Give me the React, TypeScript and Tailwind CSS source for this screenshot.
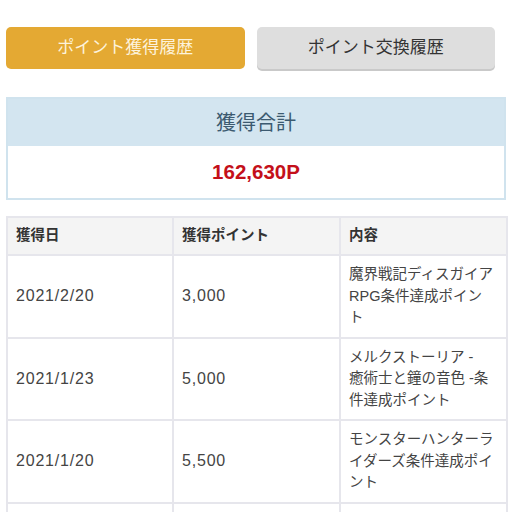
import React from 'react';

interface HistoryRow {
  date: string;
  points: string;
  detail: string[];
}

// lines are kept as the reference wraps them
const rows: HistoryRow[] = [
  { date: '2021/2/20', points: '3,000', detail: ['魔界戦記ディスガイア', 'RPG条件達成ポイン', 'ト'] },
  { date: '2021/1/23', points: '5,000', detail: ['メルクストーリア -', '癒術士と鐘の音色 -条', '件達成ポイント'] },
  { date: '2021/1/20', points: '5,500', detail: ['モンスターハンターラ', 'イダーズ条件達成ポイ', 'ント'] },
  { date: '2021/1/18', points: '2,000', detail: ['ロマンシング サガ リ・', 'ユニバース条件達成ポ', 'イント'] },
];

const font = { fontFamily: '"Liberation Sans", "Noto Sans CJK JP", sans-serif' };

export default function App() {
  return (
    <div className="min-h-[512px] bg-white" style={font}>
      {/* Tabs */}
      <div className="flex gap-3 px-[6px] pt-[27px] pr-[17px]">
        <button className="h-[42px] flex-1 rounded-[5px] bg-[#e4a933] text-[17px] text-[#fdf3dc]">
          ポイント獲得履歴
        </button>
        <button className="h-[42px] flex-1 rounded-[5px] bg-[#dedede] text-[17px] text-[#333] shadow-[0_2px_0_#c9c9c9]">
          ポイント交換履歴
        </button>
      </div>

      {/* Total */}
      <div className="mx-[6px] mt-[28px] border-2 border-[#d0e3ee]">
        <div className="flex h-[47px] items-center justify-center bg-[#d3e5f0] text-[20px] text-[#3c5a70]">
          獲得合計
        </div>
        <div className="flex h-[52px] items-center justify-center text-[20.5px] font-bold text-[#c4101a]">
          162,630P
        </div>
      </div>

      {/* Table */}
      <table className="mx-[6px] mt-[16px] w-[500px] table-fixed border-collapse">
        <colgroup>
          <col className="w-[166px]" />
          <col className="w-[167px]" />
          <col className="w-[167px]" />
        </colgroup>
        <thead>
          <tr className="h-[38px] bg-[#f4f4f4] text-left text-[14.5px] font-bold text-[#333]">
            <th className="border-2 border-[#e6e6ec] px-[8px]">獲得日</th>
            <th className="border-2 border-[#e6e6ec] px-[8px]">獲得ポイント</th>
            <th className="border-2 border-[#e6e6ec] px-[8px]">内容</th>
          </tr>
        </thead>
        <tbody>
          {rows.map((r) => (
            <tr key={r.date} className="h-[82px] text-[#444]">
              <td className="border-2 border-[#e6e6ec] px-[8px] text-[16px] tracking-[0.05em]">{r.date}</td>
              <td className="border-2 border-[#e6e6ec] px-[8px] text-[16px] tracking-[0.05em]">{r.points}</td>
              <td className="border-2 border-[#e6e6ec] px-[8px] py-[8px] text-[14.5px] leading-[21.5px]">
                {r.detail.map((line, i) => (
                  <div key={i} className="whitespace-nowrap">
                    {line}
                  </div>
                ))}
              </td>
            </tr>
          ))}
        </tbody>
      </table>
    </div>
  );
}
